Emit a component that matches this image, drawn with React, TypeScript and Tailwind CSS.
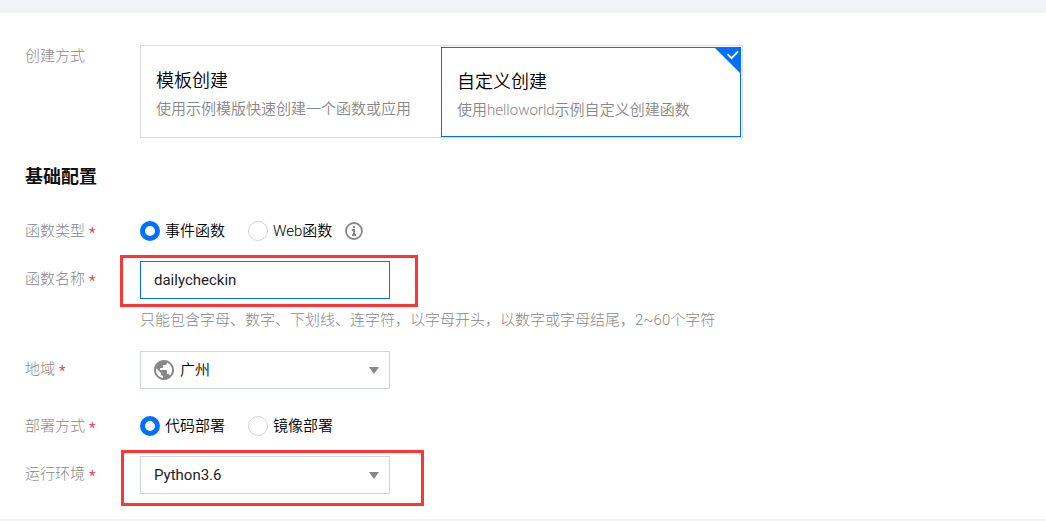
import { useState } from 'react'
import type { ReactNode } from 'react'
import { MdPublic } from 'react-icons/md'

const createModes = [
  { value: 'template', title: '模板创建', desc: '使用示例模版快速创建一个函数或应用' },
  { value: 'custom', title: '自定义创建', desc: '使用helloworld示例自定义创建函数' },
]

function Label({ htmlFor, id, required, children }: { htmlFor?: string; id?: string; required?: boolean; children: ReactNode }) {
  const content = (
    <>
      {children}
      {required && <span className="ml-1 align-[-2px] leading-none font-normal text-[#e54545]">*</span>}
    </>
  )
  const style = 'w-[115px] shrink-0 font-light text-[#888]'
  return htmlFor ? (
    <label htmlFor={htmlFor} className={`${style} pb-0.5`}>{content}</label>
  ) : (
    <div id={id} className={style}>{content}</div>
  )
}

function Radio({ name, label, checked, onChange }: { name: string; label: string; checked: boolean; onChange: () => void }) {
  return (
    <label className="flex items-center gap-[5px] text-black">
      <input
        type="radio"
        name={name}
        checked={checked}
        onChange={onChange}
        className="size-5 appearance-none rounded-full border border-[#cfd5de] bg-white checked:border-[5px] checked:border-[#006eff]"
      />
      {label}
    </label>
  )
}

function Arrow() {
  return (
    <svg viewBox="0 0 10 7" className="pointer-events-none absolute top-4 right-[11px] h-[7px] w-[10px]" aria-hidden="true">
      <path d="M0 0h10L5 7z" fill="#888" />
    </svg>
  )
}

function InfoIcon() {
  return (
    <svg viewBox="0 0 18 18" className="-ml-[10px] size-[18px]" aria-hidden="true">
      <circle cx="9" cy="9" r="8" fill="none" stroke="#888" strokeWidth="1.8" />
      <path d="M8 4h2v2H8zM7 7h3v5h1v2H7v-2h1V9H7z" fill="#888" />
    </svg>
  )
}

export default function App() {
  const [mode, setMode] = useState('custom')
  const [type, setType] = useState('event')
  const [name, setName] = useState('dailycheckin')
  const [region, setRegion] = useState('gz')
  const [deploy, setDeploy] = useState('code')
  const [runtime, setRuntime] = useState('Python3.6')

  return (
    <div className="border-t-[13px] border-b-2 border-[#f2f3f8] bg-white font-[Roboto,'Noto_Sans_CJK_SC',sans-serif] text-[15px] leading-5 font-[350]">
      <form className="px-[25px] pt-8 pb-[25px]" onSubmit={(e) => e.preventDefault()}>
        <div className="flex items-start">
          <div className="pt-px">
            <Label>创建方式</Label>
          </div>
          <div className="flex w-[603px] border border-[#ddd]">
            {createModes.map((m) => (
              <button
                key={m.value}
                type="button"
                aria-pressed={mode === m.value}
                onClick={() => setMode(m.value)}
                className={
                  mode === m.value
                    ? 'relative mt-px mr-px h-[90px] flex-1 border border-[#006eff] px-[15px] pt-[5px] text-left'
                    : 'h-[91px] w-[300px] px-[15px] pt-1 text-left'
                }
              >
                <span className="block text-lg leading-6 text-black">{m.title}</span>
                <span className="mt-1.5 block leading-5 text-[#888]">{m.desc}</span>
                {mode === m.value && (
                  <svg viewBox="0 0 26 26" className="absolute top-0 right-0 size-[26px]" aria-hidden="true">
                    <path d="M1 0h25v25z" fill="#006eff" />
                    <path d="M13.5 6l4 4.2 6.5-6.7" fill="none" stroke="#fff" strokeWidth="1.8" />
                  </svg>
                )}
              </button>
            ))}
          </div>
        </div>

        <h2 className="mt-[27px] text-lg leading-6 font-bold text-[#111]">基础配置</h2>

        <div className="mt-8 flex items-center">
          <Label id="type-label" required>函数类型</Label>
          <div role="radiogroup" aria-labelledby="type-label" className="flex items-center gap-[23px]">
            <Radio name="type" label="事件函数" checked={type === 'event'} onChange={() => setType('event')} />
            <Radio name="type" label="Web函数" checked={type === 'web'} onChange={() => setType('web')} />
            <InfoIcon />
          </div>
        </div>

        <div className="mt-5 flex items-center">
          <Label htmlFor="name" required>函数名称</Label>
          <div className="relative w-[250px]">
            <input
              id="name"
              type="text"
              value={name}
              onChange={(e) => setName(e.target.value)}
              className="block h-[38px] w-full border border-[#006eff] px-[13px] font-normal text-[#222] outline-none"
            />
            <div className="pointer-events-none absolute -top-[6px] -right-7 -bottom-2 -left-5 border-[3px] border-[#fc3535]" />
          </div>
        </div>
        <p className="mt-[11px] ml-[115px] font-light text-[#888]">只能包含字母、数字、下划线、连字符，以字母开头，以数字或字母结尾，2~60个字符</p>

        <div className="mt-[21px] flex items-center">
          <Label htmlFor="region" required>地域</Label>
          <div className="relative w-[250px]">
            <select
              id="region"
              value={region}
              onChange={(e) => setRegion(e.target.value)}
              className="block h-[38px] w-full appearance-none border border-[#cfd5de] bg-white pr-8 pl-[39px] text-black"
            >
              <option value="gz">广州</option>
            </select>
            <MdPublic size={24} className="pointer-events-none absolute top-[7px] left-3 text-[#888]" />
            <Arrow />
          </div>
        </div>

        <div className="mt-[27px] flex items-center">
          <Label id="deploy-label" required>部署方式</Label>
          <div role="radiogroup" aria-labelledby="deploy-label" className="flex items-center gap-[23px]">
            <Radio name="deploy" label="代码部署" checked={deploy === 'code'} onChange={() => setDeploy('code')} />
            <Radio name="deploy" label="镜像部署" checked={deploy === 'image'} onChange={() => setDeploy('image')} />
          </div>
        </div>

        <div className="mt-5 flex items-center">
          <Label htmlFor="runtime" required>运行环境</Label>
          <div className="relative w-[250px]">
            <select
              id="runtime"
              value={runtime}
              onChange={(e) => setRuntime(e.target.value)}
              className="block h-[38px] w-full appearance-none border border-[#cfd5de] bg-white pr-8 pl-[13px] font-normal text-[#222]"
            >
              <option>Python3.6</option>
            </select>
            <Arrow />
            <div className="pointer-events-none absolute -top-[6px] -right-[34px] -bottom-3 -left-[19px] border-[3px] border-[#fc3535]" />
          </div>
        </div>
      </form>
    </div>
  )
}
